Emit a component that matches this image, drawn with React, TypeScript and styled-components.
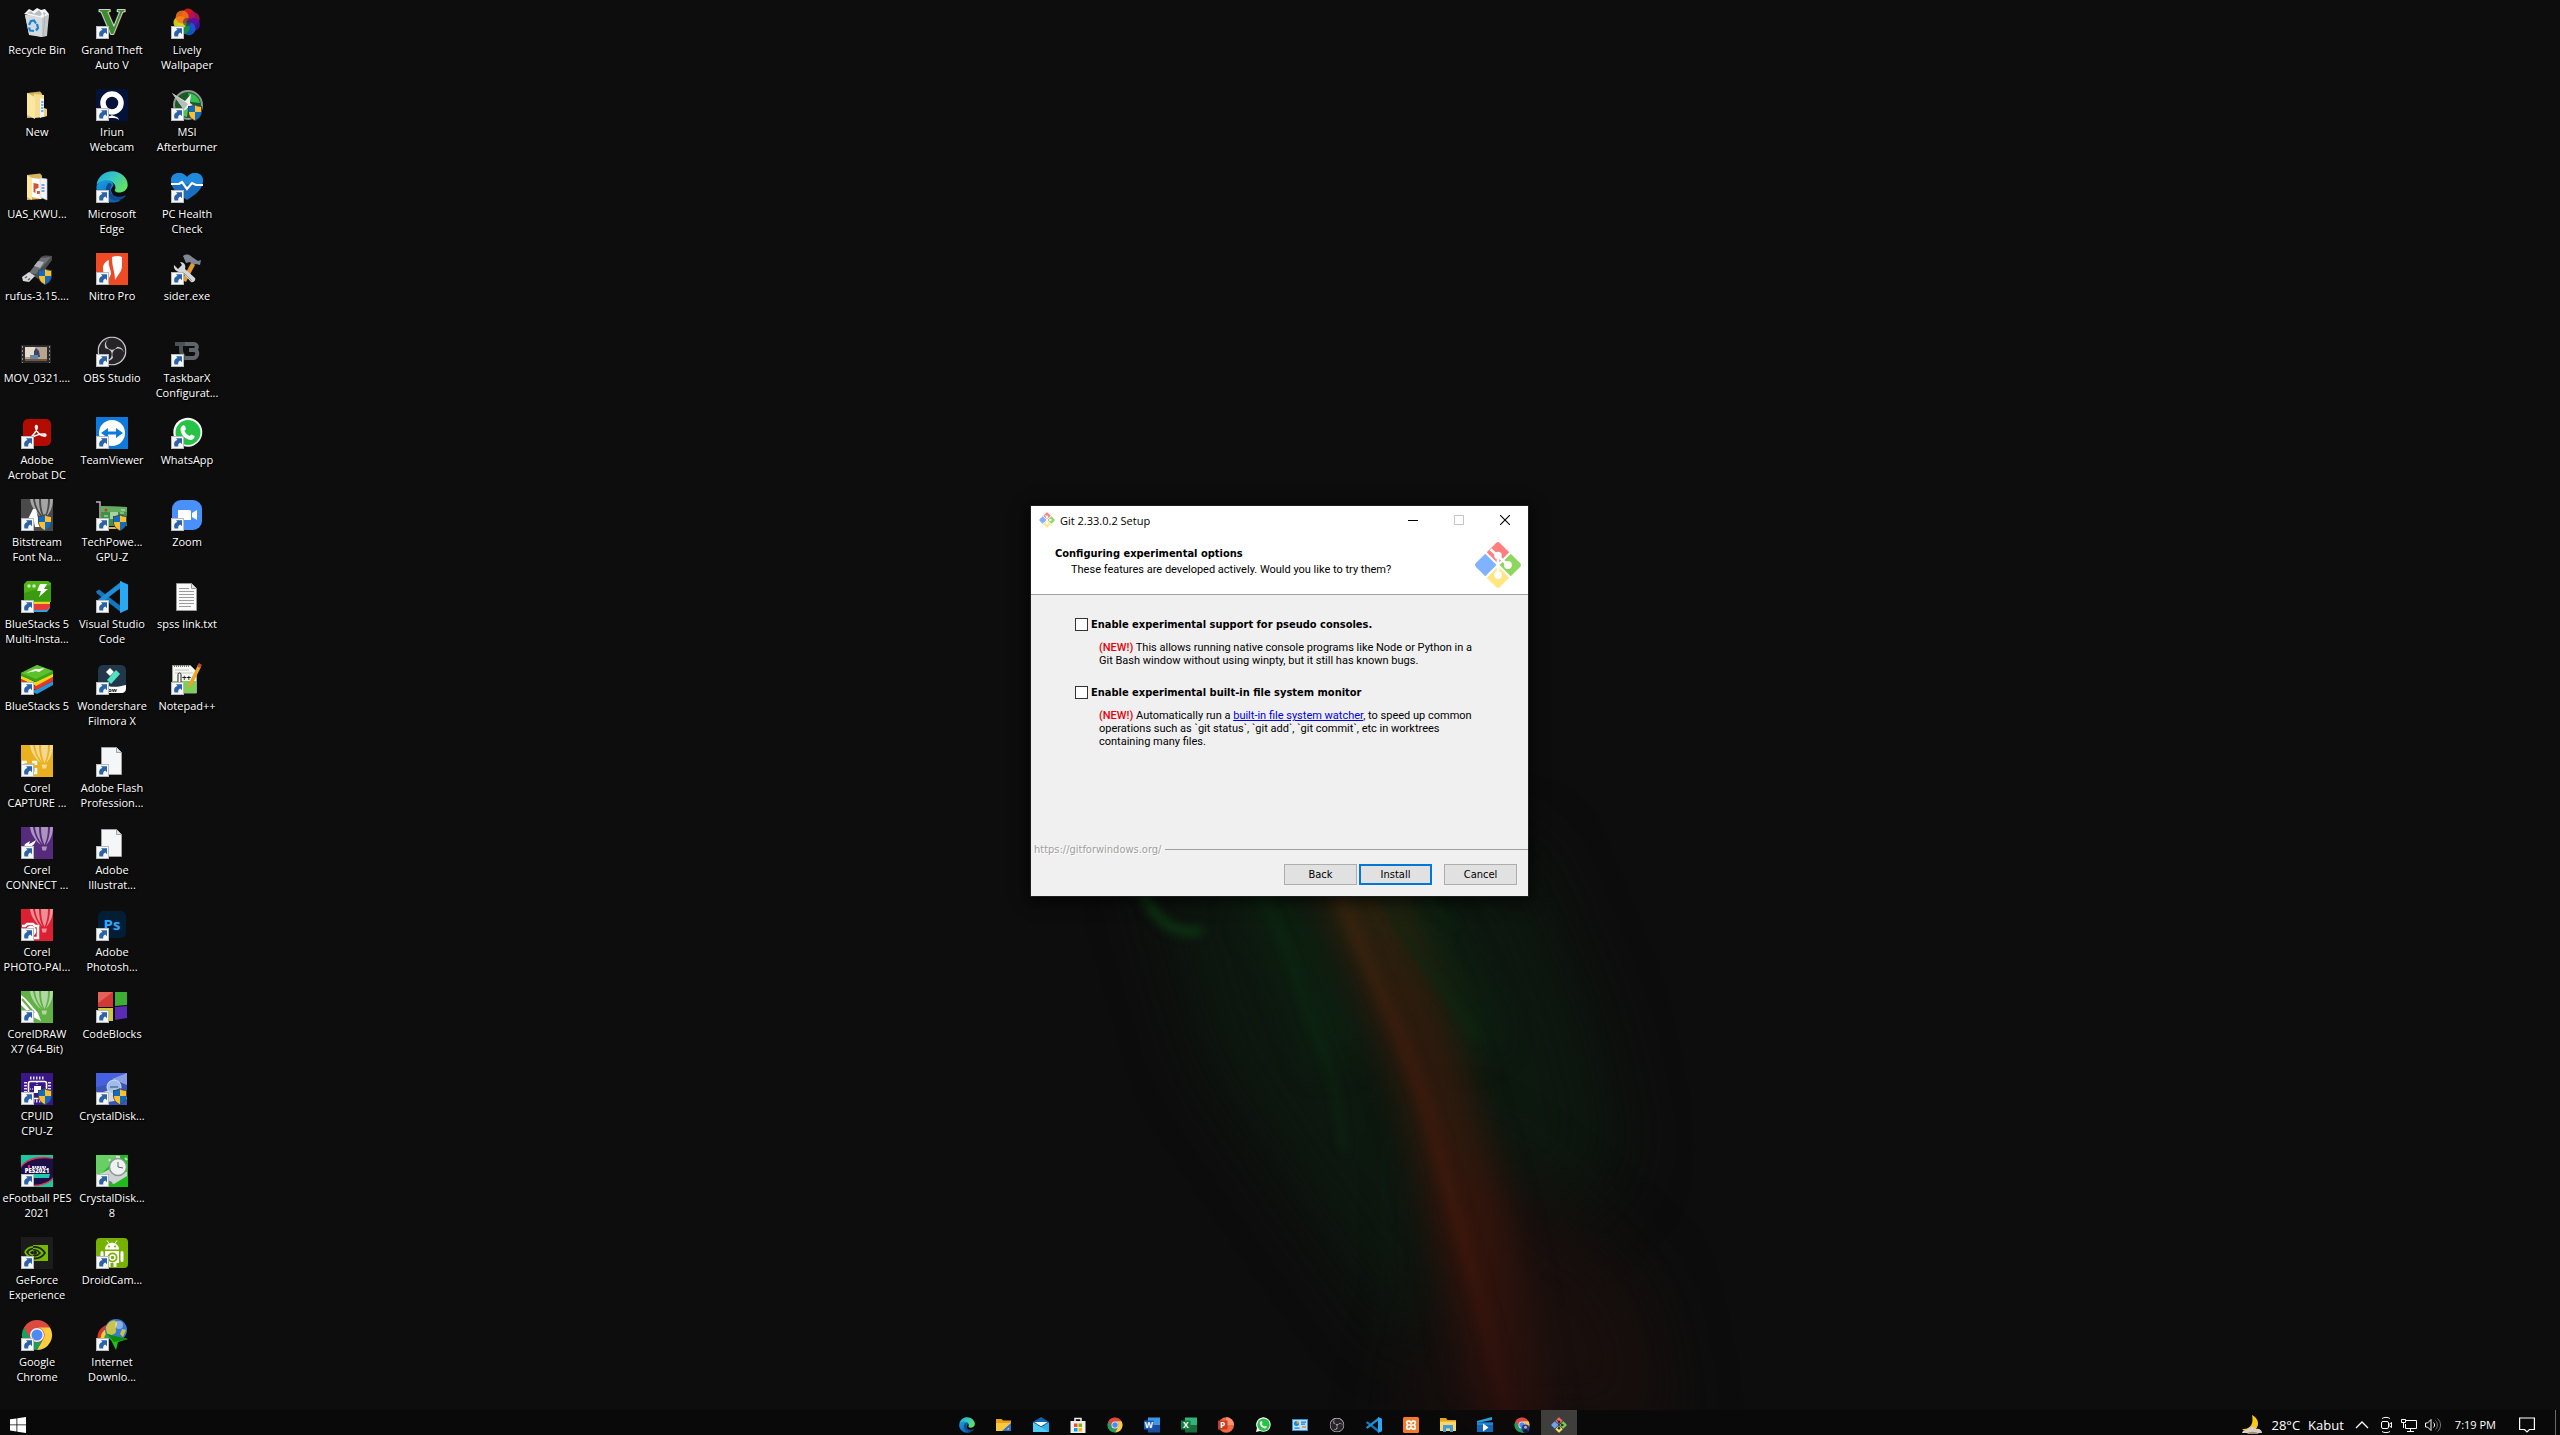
import React from 'react';
import styled, { createGlobalStyle, css } from 'styled-components';
import { SiObsstudio } from 'react-icons/si';

const shellFont = '"Open Sans", "Noto Sans", sans-serif';
const dialogFont = '"DejaVu Sans Condensed", "DejaVu Sans", sans-serif';
const proseFont = 'Roboto, "Liberation Sans", sans-serif';

const GlobalStyle = createGlobalStyle`
  *, *::before, *::after { box-sizing: border-box; }
  body { margin: 0; background: #0d0d0d; }
  button { font: inherit; color: inherit; margin: 0; padding: 0; border: 0; background: none; }
`;

/* ---------- page ---------- */

const Desktop = styled.div`
  position: relative;
  display: flex;
  flex-direction: column;
  height: 100vh;
  min-height: 640px;
  overflow: hidden;
  background: #0d0d0d;
  font-family: ${shellFont};
  font-size: 11px;
  line-height: 15px;
  color: #fff;
`;

const WallpaperArt = styled.svg`
  position: absolute;
  inset: 0;
  width: 100%;
  height: 100%;
`;

const IconGrid = styled.ul`
  position: relative;
  flex: 1;
  min-height: 0;
  display: grid;
  grid-auto-flow: column;
  grid-template-rows: repeat(auto-fill, 82px);
  grid-auto-columns: 75px;
  justify-content: start;
  margin: 0;
  padding: 0;
  list-style: none;
`;

const Launcher = styled.button`
  width: 74px;
  height: 82px;
  padding-top: 7px;
  display: flex;
  flex-direction: column;
  align-items: center;
  gap: 3px;
`;

const Artwork = styled.svg<{ $size: number }>`
  display: block;
  flex: none;
  overflow: visible;
  width: ${(p) => p.$size}px;
  height: ${(p) => p.$size}px;
`;

const LauncherName = styled.span`
  white-space: nowrap;
  text-align: center;
  text-shadow: 0 1px 2px #000, 1px 1px 1px #000;
`;

const NameLine = styled.span`
  display: block;
`;

/* ---------- icon artwork, all on a 32 unit square ---------- */

const ShortcutArrow = () => (
  <g>
    <rect x=".5" y="19.5" width="12" height="12" fill="#f6f7f8" stroke="#b8bcc0" />
    <path d="M3.500 29.500c-1-4 .5-6 3-6.500l-1.500-1.800h6v6l-1.700-1.600C7.500 26.200 7 28 7.300 29.500z" fill="#2c62a8" />
  </g>
);

const Shield = () => (
  <g>
    <path d="M24 15c2 1.500 4.500 2 7 2v5c0 5-3 8-7 10-4-2-7-5-7-10v-5c2.500 0 5-.5 7-2z" fill="#3d4a55" />
    <path d="M24 16.300V23h-6v-5c2.200 0 4.200-.6 6-1.700zM24 23h6c0 4-2.500 6.500-6 8.300z" fill="#0f6cc0" />
    <path d="M24 16.300V23h6v-5c-2.200 0-4.200-.6-6-1.700zM24 23h-6c0 4 2.500 6.500 6 8.300z" fill="#fdbf2d" />
  </g>
);

const RecycleBin = () => (
  <g>
    <path d="M4 8l4 19 13 3 4-4 3-19z" fill="#c9cdd0" />
    <path d="M4 8l17 3 7-4-2 22-5 1z" fill="#c3c8cb" />
    <path d="M4 8l4 20 13 2V11z" fill="#d6dadd" />
    <path d="M3 7l5-5 4 2 4-3 4 2 4-1 4 5-7 4z" fill="#f4f5f6" />
    <path d="M6 6l4-2 3 3 5-4 3 4-2 2zM22 5l3 1-2 3z" fill="#b7bcc0" />
    <path d="M8 18l2-4 3-.5 2 3M16 17l1 4-2 2.500M13 24l-4-.5-1-3" fill="none" stroke="#1485d8" strokeWidth="2.200" />
    <path d="M24 9l-2 20" stroke="#aeb4b8" />
  </g>
);

const Folder = ({ sheets = false }: { sheets?: boolean }) => (
  <g>
    <path d="M6 4l13-1.500 2 2V28l-15 1z" fill="#d9b45f" />
    {sheets ? (
      <g>
        <path d="M11 7l9 1v20l-9-2z" fill="#fff" />
        <path d="M12.500 12l5 1v4l-3 1v4l-2-1zM16 20h4v3h-4z" fill="#d2532f" />
        <path d="M19 7l7 1v21l-7-3z" fill="#f2f4f6" stroke="#c9d0d6" strokeWidth=".6" />
        <path d="M20.500 14h3M20.500 17h3M20.500 20h3" stroke="#4a90d2" strokeWidth="1.500" />
        <path d="M6 4l5 3v22l-5-3z" fill="#fbe6a2" />
      </g>
    ) : (
      <g>
        <path d="M13 5l10 1v22l-10 1z" fill="#f5dd8d" />
        <path d="M19 9l4 1v17l-4 2z" fill="#eff5fb" />
        <path d="M20 13h2.500M20 16h2.500M20 19h2.500M20 22h2.500" stroke="#5aa3dd" strokeWidth="1.500" />
        <path d="M23 19l3 1v7l-3 1z" fill="#f1cf70" />
        <path d="M6 4l8 4v22l-8-4z" fill="#fbe6a2" />
      </g>
    )}
  </g>
);

const UsbStick = () => (
  <g>
    <path d="M8 20L20 4c1-1.500 7-2 11-1v4L17 26z" fill="#4a4d50" />
    <path d="M8 20L20 5l10-1-15 17z" fill="#6c7074" />
    <path d="M13 13l4-5 6 1-4 6z" fill="#aeb3b7" />
    <path d="M1 24l7-5 6 4-6 6-6-1z" fill="#d5d8da" />
    <path d="M4 25l2-1.500M7 27l2-1.500" stroke="#5b5f62" strokeWidth="1.500" />
  </g>
);

const MovieClip = () => (
  <g>
    <path d="M0 10h30v18H0z" fill="#2b2b2b" />
    <path d="M4 12h22v14H4z" fill="#b9a58f" />
    <path d="M4 12h10v10H4z" fill="#e7dccb" />
    <path d="M13 16l2-3 3 3 1 6h-6z" fill="#394468" />
    <path d="M9 20h8v6H9z" fill="#6488aa" />
    <path d="M4 24h22v2H4z" fill="#72583f" />
    <path d="M1.500 11v17M28.500 11v17" stroke="#8d8d8d" strokeDasharray="2 2" />
  </g>
);

const Acrobat = () => (
  <g>
    <rect x="2" y="2" width="28" height="27" rx="5" fill="#b30b00" />
    <path d="M9 21.500c2-3 6.500-6 7.200-11 .3-2.500-2-2.500-1.700 0 .6 4 4.500 8.500 9 8.600 2 0 1.700-1.900 0-2-4-.3-8.500 1-13 3.500-2 1.200-2.500 2.200-1.500.9z" fill="none" stroke="#fff" strokeWidth="1.600" />
  </g>
);

const BalloonTile = ({ fill, children }: { fill: string; children?: React.ReactNode }) => (
  <g>
    <path d="M0 0h32v32H0z" fill={fill} />
    <g fill="#fff" fillOpacity=".5">
      <path d="M9 0h3c1 7 4 13 8 18C15 14 10 8 9 0z" />
      <path d="M14 0h4c0 7 1 13 4 18-4-5-7-10-8-18z" />
      <path d="M20 0h7c0 7-1 13-3.500 18C21 13 20 7 20 0z" />
      <path d="M29 0h3c0 8-3 14-7 18 2.500-5 4-11 4-18z" />
      <path d="M20.500 19.500h5.500l-1 4h-3.500z" />
    </g>
    {children}
  </g>
);

const FontTile = () => (
  <BalloonTile fill="#4a4a4a">
    <path d="M5 24L12 10h3l4 18h-5l-1-5z" fill="#fff" />
  </BalloonTile>
);
const CaptureTile = () => (
  <BalloonTile fill="#ebb01f">
    <path d="M2 21v-4h4M11 17h4v3M15 23v5h-4" fill="none" stroke="#fff" strokeWidth="2.500" />
  </BalloonTile>
);
const ConnectTile = () => (
  <BalloonTile fill="#562a7c">
    <path d="M4 17l5-3-1 3c3-1 5-3 7-4-1 4-4 7-7 7l1 3-6-3z" fill="#fff" />
  </BalloonTile>
);
const PhotoTile = () => (
  <BalloonTile fill="#dc1f31">
    <path d="M1 17h3l2-2h6l2 2h3v12h-6" fill="none" stroke="#fff" strokeWidth="2.500" />
    <circle cx="10" cy="22" r="4" fill="none" stroke="#fff" strokeWidth="2.500" />
  </BalloonTile>
);
const DrawTile = () => (
  <BalloonTile fill="#62b146">
    <path d="M0 4l5 4 12 14 3 8-8-4L0 14z" fill="#fff" />
    <path d="M1 8l12 14" stroke="#62b146" strokeWidth="2" />
  </BalloonTile>
);

const BlueStacksMulti = () => (
  <g>
    <path d="M3 24h26v3l-3 4H5z" fill="#2ba3e0" />
    <path d="M3 22h26v4l-3 3H3z" fill="#e83a3a" />
    <path d="M3 19h26v4H3z" fill="#f6cf1f" />
    <path d="M6 0h21l3 2v19H3V3z" fill="#4fb318" />
    <path d="M3 12l27-8v16H3z" fill="#3a9b10" />
    <path d="M19 3h7l-3 5h4l-9 8 2-6h-4z" fill="#fff" />
    <circle cx="8" cy="5" r="1.800" fill="#c7efae" />
    <circle cx="13" cy="5" r="1.800" fill="#c7efae" />
  </g>
);

const BlueStacks = () => (
  <g>
    <path d="M1 20l13 7 18-9v4l-16 9L1 25z" fill="#2196dd" />
    <path d="M0 16l14 7 18-9v4l-17 9L0 20z" fill="#e8342c" />
    <path d="M0 12l14 7 18-9v4l-17 9L0 16z" fill="#f8d31c" />
    <path d="M0 10L16 2l16 6v3l-17 8L0 13z" fill="#37a514" />
    <path d="M0 10L16 2l16 6-17 8z" fill="#5cc12b" />
    <path d="M5 10l9-4h4l6-1-6 4-3-1z" fill="#fff" />
  </g>
);

const RoadsterV = () => (
  <text x="16" y="27" textAnchor="middle" fontFamily="Liberation Serif" fontWeight="700" fontSize="36" fill="#3f8a2e" stroke="#f3f5f2" strokeWidth="1.600" paintOrder="stroke">
    V
  </text>
);

const Iriun = () => (
  <g>
    <rect width="32" height="32" rx="2" fill="#021238" />
    <path d="M9 31c1-4 4-3 7-5 3 2 6 1 7 5-2-2-5-2-7-2s-5 0-7 2z" fill="#fff" />
    <circle cx="16" cy="14" r="9" fill="none" stroke="#fff" strokeWidth="5.500" />
  </g>
);

const Edge = () => (
  <g>
    <defs>
      <linearGradient id="edgeTop" x1="0" y1="0" x2="1" y2=".6">
        <stop offset="0" stopColor="#1fa9dc" />
        <stop offset=".5" stopColor="#36c6c4" />
        <stop offset="1" stopColor="#63e164" />
      </linearGradient>
      <linearGradient id="edgeSide" x1="0" y1="0" x2=".6" y2="1">
        <stop offset="0" stopColor="#1aa0e6" />
        <stop offset="1" stopColor="#0f62b4" />
      </linearGradient>
    </defs>
    <path d="M.5 14C2 5 9 .3 16 .3 25 .3 31.700 7 31.700 14c0 5-4.700 7.500-8.700 7.500-3 0-5-1.500-4-3 1-1.500 1-7.500-6.500-8.500C6 9.300 2 12 .5 14z" fill="url(#edgeTop)" />
    <path d="M.5 15C2 11.500 6.500 8.500 12 9.300c3 .5 5 2 5.700 4.700l-3 5 4 9 6 1.500c-3 1.700-6 2.200-9.200 2C6 31-.5 23 .5 15z" fill="url(#edgeSide)" />
    <path d="M12 12.500C9 16 9 23 14 27.500c4 3.500 11 2.500 15.500-2 .7-.8 0-1.200-1-.8-5.500 2.300-13 .8-14.200-5.200-.3-2.500.7-4.500 1.700-5.500-1.500-2.200-3-2.500-4-1.500z" fill="#124a90" />
  </g>
);

const Nitro = () => (
  <g>
    <path d="M0 0h32v32H0z" fill="#ee4a23" />
    <path d="M16 4c4-1.500 7-1.500 10 0v8c0 7-3 8-7 15 0-9-3-12-3-23z" fill="#fff" />
    <path d="M7 15c0-4 3-7 6-8-1 6 2 9 2 14-1 3-3 5-4 7-2-4-4-7-4-13z" fill="#fff" />
  </g>
);

const ObsDisc = () => (
  <g>
    <circle cx="16" cy="16" r="14.500" fill="#262427" />
    <SiObsstudio x="1.500" y="1.500" size={29} color="#c9c9c9" />
  </g>
);

const TeamViewer = () => (
  <g>
    <path d="M0 0h32v32H0z" fill="#0e7bdc" />
    <circle cx="16" cy="16" r="13" fill="#fff" />
    <path d="M5 16l7-5v3.500h8V11l7 5-7 5v-3.500h-8V21z" fill="#0e7bdc" />
  </g>
);

const GraphicsCard = () => (
  <g>
    <path d="M0 3h4v28" fill="none" stroke="#b9b9b9" strokeWidth="1.500" />
    <path d="M5 7l26 1v19H5z" fill="#3f9145" />
    <path d="M5 7l26 1v5H5z" fill="#63ad60" />
    <rect x="14" y="13" width="8" height="7" fill="#a8d3a1" />
    <circle cx="10" cy="11" r="1.500" fill="#c73b33" />
    <path d="M8 17h4M8 20h4M25 11h4M24 14h4" stroke="#d6e8c9" />
    <path d="M8 28h14v2H8z" fill="#d8b64c" />
  </g>
);

const VsCode = () => (
  <g>
    <path d="M0 10.500l3-2L26 26v6L1 12.500z" fill="#1076bd" />
    <path d="M0 21.500l3 2L26 6V0L1 19.500z" fill="#1d8fd8" />
    <path d="M24 0l8 3.500v25L24 32V0z" fill="#2aa8f2" />
    <path d="M24 9v14l-9-7z" fill="#0d0d0d" />
  </g>
);

const Filmora = () => (
  <g>
    <rect x="2" y="2" width="28" height="28" rx="5" fill="#22384a" />
    <path d="M14 5l4 4-4 4-4-4z" fill="#fff" />
    <path d="M20 7l4 4-9 10-4-4z" fill="#50e3c2" />
    <path d="M12 23c7 2 13 0 18-1v3c0 4-2 5-5 5H12z" fill="#fff" />
    <text x="12" y="29" fontFamily="Open Sans" fontWeight="700" fontSize="6" fill="#111">
      ow
    </text>
  </g>
);

const BlankPage = () => (
  <g>
    <path d="M5.500 2.500h15l5 5v22h-20z" fill="#f5f6f7" stroke="#9fa3a6" />
    <path d="M20.500 2.500v5h5" fill="#dfe2e4" stroke="#9fa3a6" />
  </g>
);

const TextPage = () => (
  <g>
    <path d="M5.500 2.500h15l5 5v22h-20z" fill="#fafafa" stroke="#9a9a9a" />
    <path d="M20.500 2.500v5h5" fill="#e3e3e3" stroke="#9a9a9a" />
    <path d="M8 7.500h10M8 10.500h15M8 13.500h15M8 16.500h15M8 19.500h15M8 22.500h15M8 25.500h12" stroke="#9b9b9b" />
  </g>
);

const Photoshop = () => (
  <g>
    <rect x="2" y="2" width="28" height="27" rx="5" fill="#001e36" />
    <text x="16" y="21" textAnchor="middle" fontFamily="Open Sans" fontWeight="700" fontSize="15" fill="#31a8ff">
      Ps
    </text>
  </g>
);

const CodeBlocks = () => (
  <g>
    <path d="M2 1h15v15H2z" fill="#cf3a34" />
    <path d="M2 1h15L2 12z" fill="#e2625a" />
    <path d="M19 1h12v13l-12 1z" fill="#3fae35" />
    <path d="M2 17h15v13H4z" fill="#d0ca39" />
    <path d="M19 16l12-1v12l-12 2z" fill="#5a2bb5" />
  </g>
);

const CpuChip = () => (
  <g>
    <path d="M0 0h32v32H0z" fill="#3b1686" />
    <path d="M9 5h15M9 28h15M4.500 9v15M28.500 9v15" stroke="#e3dbf4" strokeWidth="3" strokeDasharray="1.500 1.500" />
    <rect x="7.500" y="8.500" width="18" height="17" rx="2" fill="none" stroke="#fff" strokeWidth="1.600" />
    <rect x="13" y="13" width="7" height="7" fill="#fff" />
    <path d="M16 9v6M9 16h6" stroke="#fff" strokeDasharray="1 1" />
  </g>
);

const DiskInfo = () => (
  <g>
    <path d="M0 0h31v32H0z" fill="#3c55b8" />
    <path d="M0 0h31v8L0 14z" fill="#4560e0" />
    <path d="M31 0v12L16 6z" fill="#8b9fe4" />
    <path d="M4 20l16-5 11 4v7L12 29z" fill="#d4d8dc" />
    <circle cx="18" cy="14" r="7" fill="#a9c8ec" fillOpacity=".9" stroke="#d7e4f3" />
    <path d="M14 14h8" stroke="#5f86b6" strokeWidth="2" />
  </g>
);

const DiskMark = () => (
  <g>
    <path d="M0 0h32v32H0z" fill="#1fba1c" />
    <path d="M0 0h24L0 24z" fill="#67cf63" />
    <path d="M2 20l14-7 15 4v4L18 29l-8-3z" fill="#cfd3d3" />
    <path d="M4 22l12 6" stroke="#777" strokeWidth="1.500" />
    <circle cx="22" cy="12" r="8.500" fill="#f0f2f2" stroke="#8e9696" strokeWidth="1.500" />
    <path d="M22 12V7M22 12l5 1" stroke="#5d6464" />
    <path d="M20 2h4M29 3l2 2M14 4l-1 2" stroke="#d8dada" strokeWidth="2" />
  </g>
);

const Efootball = () => (
  <g>
    <path d="M0 0h32v32H0z" fill="#19c9a2" />
    <path d="M0 11C6 2 20 0 32 3v21c-6 7-20 9-32 6z" fill="#e0354f" />
    <path d="M0 13C6 4 20 2 32 4v18c-6 8-20 9-32 7z" fill="#1c0f48" />
    <path d="M12 19h17l-1 4H12z" fill="#1fc7ae" />
    <text x="16" y="18" textAnchor="middle" fontFamily="Open Sans" fontWeight="800" fontSize="6" fill="#fff">
      PES2021
    </text>
    <path d="M7 10h2v3H7z" fill="#d8258d" />
    <path d="M11 12h14" stroke="#d9d5e8" strokeWidth="2" strokeDasharray="2 .5" />
  </g>
);

const GeForce = () => (
  <g>
    <path d="M0 0h32v32H0z" fill="#1c1c1c" />
    <path d="M12 8h15v16H12z" fill="#76b900" />
    <path d="M4 15c5-7 15-7 20 1-5 7-15 8-20-1z" fill="none" stroke="#1c2410" strokeWidth="1.800" />
    <path d="M4 15c2-3.500 5-5 8-5.200M4 15c2 4 5 5.500 8 6" fill="none" stroke="#76b900" strokeWidth="1.800" />
    <path d="M8 15.500c3-4 8-3.500 11 .5-3 4-8 3.500-11-.5z" fill="none" stroke="#1c2410" strokeWidth="1.600" />
    <path d="M8 15.500c1-1.500 2.500-2.200 4-2.500M8 15.500c1 1.500 2.500 2.500 4 2.800" fill="none" stroke="#76b900" strokeWidth="1.600" />
    <circle cx="14" cy="15.700" r="2" fill="#1c2410" />
  </g>
);

const DroidCam = () => (
  <g>
    <rect y="1" width="32" height="30" rx="4" fill="#76b100" />
    <path d="M9 12.500c0-9 14-9 14 0z" fill="#fff" />
    <path d="M11 3.500l2 3M21 3.500l-2 3" stroke="#fff" />
    <circle cx="13" cy="9.500" r="1" fill="#76b100" />
    <circle cx="19" cy="9.500" r="1" fill="#76b100" />
    <path d="M9 14h14v12H9z" fill="#fff" />
    <path d="M6 15.500v8M26 15.500v8" stroke="#fff" strokeWidth="3" strokeLinecap="round" />
    <path d="M13 26v4M19 26v4" stroke="#fff" strokeWidth="3" />
    <circle cx="16.500" cy="20.500" r="5" fill="#76b100" />
    <circle cx="16.500" cy="20.500" r="2.500" fill="none" stroke="#fff" strokeWidth="1.500" />
  </g>
);

const Chrome = () => {
  const blade = 'M3 8.500A15 15 0 0 1 29 8.500H16A7.500 7.500 0 0 0 9.500 19.750z';
  return (
    <g>
      <circle cx="16" cy="16" r="14.500" fill="#db4437" />
      <path d={blade} fill="#db4a3e" />
      <path d={blade} fill="#ffcd42" transform="rotate(120 16 16)" />
      <path d={blade} fill="#17a05e" transform="rotate(240 16 16)" />
      <circle cx="16" cy="16" r="7" fill="#f4f6f8" />
      <circle cx="16" cy="16" r="5.500" fill="#4c8bf5" />
    </g>
  );
};

const ChromeProfile = () => (
  <g>
    <Chrome />
    <circle cx="23" cy="23" r="8" fill="#1b3f9c" />
    <circle cx="23" cy="20.500" r="3" fill="#d9a688" />
    <path d="M18 30c0-8 10-8 10 0z" fill="#101a35" />
  </g>
);

const DownloadManager = () => (
  <g>
    <path d="M3 26C-2 14 6 5 16 5l1 4C9 9 4 16 7 26z" fill="#d8352a" />
    <path d="M6 26C2 17 7 9 16 8l1 3c-7 1-10 8-7 15z" fill="#f5d02c" />
    <path d="M9 26c-3-8 1-14 8-15v3c-5 1-6 7-4 12z" fill="#39a935" />
    <circle cx="20" cy="11" r="11" fill="#3a7ad6" />
    <path d="M10 8c3-7 9-8 11-5 1 3-2 5-1 8s-3 5-6 5-4-4-4-8zM26 10l4 1-3 7-3-3z" fill="#c9c34a" />
    <circle cx="23" cy="6" r="4" fill="#fff" fillOpacity=".4" />
    <path d="M11 15l21 5-10 3-2 8-4-8z" fill="#1ec41a" />
    <path d="M11 15l21 5-14 3z" fill="#0f8a10" />
  </g>
);

const LivelyPetals = () => {
  const petals = ['#ee1c1c', '#b0125e', '#4b12b5', '#1262d8', '#14982d', '#f4e51a', '#f7761a'];
  return (
    <g>
      {petals.map((fill, i) => (
        <circle key={fill} cx="16" cy="8" r="6.500" fill={fill} fillOpacity=".85" transform={`rotate(${i * 51 + 10} 16 15)`} />
      ))}
      <circle cx="16" cy="15" r="4" fill="#332b52" fillOpacity=".6" />
    </g>
  );
};

const Afterburner = () => (
  <g>
    <circle cx="17" cy="16" r="14" fill="#1d5a2a" stroke="#8f9892" strokeWidth="2" />
    <path d="M17 4a12 12 0 0 1 12 10l-9-1z" fill="#36c04d" />
    <path d="M7 20a11 11 0 0 0 9 8l1-8z" fill="#46c85a" />
    <path d="M1 4l13 8 6-7-1 9 8 6-10-1-6 4 0-5z" fill="#eef0ef" />
    <path d="M1 4l16 11-6 8 0-5z" fill="#b8bdba" />
  </g>
);

const HealthHeart = () => (
  <g>
    <path d="M16 29C8 24 0 18 0 10 0 4 4 2 8 2c4 0 6 2 8 4 2-2 4-4 8-4s8 2 8 8c0 8-8 14-16 19z" fill="#1a6fc0" />
    <path d="M0 10c0-6 4-8 8-8 4 0 6 2 8 4 2-2 4-4 8-4s8 2 8 8l-1 3H1z" fill="#2089dc" />
    <path d="M0 13h8l3-2 5 7 5-6 4 2h7" fill="none" stroke="#fff" strokeWidth="2.200" />
  </g>
);

const Tools = () => (
  <g>
    <path d="M12 3c4-3 7-1 9 1l6 4 3-1-1 5-4-1-3 1-3-3-4 1z" fill="#7f8794" />
    <path d="M20 10l4 2-9 17-4-2z" fill="#e59a2f" />
    <path d="M3 12l4 4 4-4-2-3c5 0 6 4 5 7l10 9c1 2-1 5-4 4l-9-10c-5 1-9-3-8-7z" fill="#d4d7da" />
    <path d="M12 19l9 9" stroke="#90959a" />
  </g>
);

const TaskbarX = () => (
  <g fill="none" stroke="#60656a" strokeWidth="4">
    <path d="M4 9h12M10 9v6c0 4 2 6 5 9" stroke="#4c5156" />
    <path d="M14 9h9c4 0 4 6-1 6h-4 5c5 0 4 8-1 8h-8" />
  </g>
);

const WhatsApp = () => (
  <g>
    <path d="M2 30l2-8A14.500 14.500 0 1 1 10 28z" fill="#fff" />
    <circle cx="17" cy="15.500" r="12.500" fill="#27c346" />
    <path d="M11 9c1-1 2-1 3 0l1 3-1.500 2c1 2 3 4 5 5l2-1.500 3 1.500c.5 2-2 4-4 4-6-1-10-6-10-11 0-1 .5-2 1.500-3z" fill="#fff" />
  </g>
);

const ZoomCamera = () => (
  <g>
    <rect x="1" y="1" width="30" height="30" rx="9" fill="#4a90fb" />
    <path d="M7 11h11c2 0 2 1 2 2v8H9c-2 0-2-1-2-2zM21 14l5-3v10l-5-3z" fill="#fff" />
  </g>
);

const NotepadPlus = () => (
  <g>
    <path d="M1.500 2.500h18l6 6v21.500h-24z" fill="#f6f8f4" stroke="#9da59b" />
    <path d="M2 18h23v12H2z" fill="#7fce55" />
    <path d="M3 3h15" stroke="#777" strokeDasharray="1 1" strokeWidth="2" />
    <path d="M4 7h14M4 10h18" stroke="#c2c9c0" />
    <rect x="7" y="10" width="3" height="11" rx="1.500" fill="#fff" stroke="#222" />
    <text x="11" y="18" fontFamily="Open Sans" fontWeight="700" fontSize="8" fill="#1d1d1d">
      ++
    </text>
    <path d="M17 25l1-5L27 2l3 2-9 18z" fill="#e8a526" />
    <path d="M26 3l2-3 3 2-2 3z" fill="#b94a3c" />
  </g>
);

/* taskbar-only artwork */

const ExplorerPen = () => (
  <g>
    <path d="M0 4h11l3 3h16v21H0z" fill="#e89f1a" />
    <path d="M0 12h30v16H0z" fill="#fdc93c" />
    <path d="M30 12v16H12z" fill="#2e6fd8" />
    <path d="M26 21v4h-5z" fill="#fdc93c" />
  </g>
);
const Mail = () => (
  <g>
    <path d="M0 10L16 0l16 10v6H0z" fill="#0f64ad" />
    <path d="M0 11l16 9 16-9v19H0z" fill="#2db0ef" />
    <path d="M0 11l32 19H0z" fill="#52ccf8" />
    <path d="M3 10h26l-13 9z" fill="#f4f9fd" />
  </g>
);
const Store = () => (
  <g>
    <path d="M10 10V3h12v7" fill="none" stroke="#f0f0f0" strokeWidth="3" />
    <path d="M1 8h30v24H1z" fill="#f0f0f0" />
    <path d="M8 13h7v7H8z" fill="#f05022" />
    <path d="M17 13h7v7h-7z" fill="#7fba00" />
    <path d="M8 22h7v7H8z" fill="#00a3ee" />
    <path d="M17 22h7v7h-7z" fill="#ffb800" />
  </g>
);
const OfficeTile = ({ letter, tones }: { letter: string; tones: [string, string, string] }) => (
  <g>
    <path d="M8 1h24v15H8z" fill={tones[0]} />
    <path d="M8 16h24v15H8z" fill={tones[1]} />
    <path d="M0 7h19v18H0z" fill={tones[2]} />
    <text x="9.500" y="22" textAnchor="middle" fontFamily="Open Sans" fontWeight="700" fontSize="17" fill="#fff">
      {letter}
    </text>
  </g>
);
const Word = () => <OfficeTile letter="W" tones={['#3a9ae6', '#1a4fa0', '#1c5bbd']} />;
const Excel = () => <OfficeTile letter="X" tones={['#2fb57a', '#1a6a3d', '#137a43']} />;
const PowerPoint = () => (
  <g>
    <circle cx="16.500" cy="16" r="15.500" fill="#ee6a48" />
    <path d="M16.500 .5A15.500 15.500 0 0 1 32 16H16.500z" fill="#ff9272" />
    <path d="M0 7h19v18H0z" fill="#c43e1f" />
    <text x="9.500" y="22" textAnchor="middle" fontFamily="Open Sans" fontWeight="700" fontSize="17" fill="#fff">
      P
    </text>
  </g>
);
const ControlCard = () => (
  <g>
    <path d="M0 4h32v24H0z" fill="#2f93d6" />
    <path d="M2 6h28v20H2z" fill="#b9e1f8" />
    <circle cx="9" cy="13" r="5" fill="#1e7fd0" />
    <path d="M9 13V8a5 5 0 0 1 5 5z" fill="#f8a51d" />
    <path d="M18 10h10M18 14h8M5 22h10" stroke="#1e7fd0" strokeWidth="2.500" />
    <path d="M20 20h8" stroke="#f0813a" strokeWidth="3" />
  </g>
);
const Xampp = () => (
  <g>
    <rect width="32" height="32" rx="3" fill="#f47a28" />
    <path d="M10 8h3l3 4 3-4h3c3 0 4 5 0 8 4 3 3 8 0 8h-3l-3-4-3 4h-3c-3 0-4-5 0-8-4-3-3-8 0-8z" fill="none" stroke="#fff" strokeWidth="3.500" />
    <path d="M12 16h8" stroke="#fff" strokeWidth="3" />
  </g>
);
const ExplorerFolder = () => (
  <g>
    <path d="M0 2h12l3 4h17v22H0z" fill="#e5a516" />
    <path d="M0 9h32v19H0z" fill="#fbd768" />
    <path d="M6 28V16h20v14h-6v-7h-8v7H6z" fill="#3f9be4" />
  </g>
);
const Movies = () => (
  <g>
    <path d="M0 8L30 0v6L0 12z" fill="#28a4e0" />
    <path d="M0 11h32v19H0z" fill="#1567b8" />
    <path d="M0 11h32v5H0z" fill="#1f86cf" />
    <path d="M12 13l11 8-11 8z" fill="#fff" />
  </g>
);

const GitMark = ({ branch, tones }: { branch: string; tones: [string, string, string, string] }) => (
  <g>
    <g transform="rotate(45 16 16)">
      <path d="M15.300 4.700H6.500q-1.800 0-1.800 1.800v8.800h10.600z" fill={tones[0]} />
      <path d="M16.700 4.700h8.800q1.800 0 1.800 1.800v8.800H16.700z" fill={tones[1]} />
      <path d="M16.700 27.300h8.800q1.800 0 1.800-1.800v-8.800H16.700z" fill={tones[2]} />
      <path d="M15.300 27.300H6.500q-1.800 0-1.800-1.800v-8.800h10.600z" fill={tones[3]} />
    </g>
    <path d="M11 5.500l5 4.500v13M16 10l6.500 6" fill="none" stroke={branch} strokeWidth="1.800" />
    <circle cx="16" cy="9.700" r="2.500" fill={branch} />
    <circle cx="16" cy="22.600" r="2.600" fill={branch} />
    <circle cx="22.600" cy="16" r="2.600" fill={branch} />
  </g>
);
const GitSoft = () => <GitMark branch="#fff" tones={['#ff7f7f', '#8fd65f', '#ffe680', '#7fb2ff']} />;
const GitTask = () => <GitMark branch="#2c3030" tones={['#ef6a6a', '#7ccf50', '#f7df6c', '#6aa3f2']} />;

/* ---------- desktop launchers ---------- */

type Shortcut = { name: string[]; Art: React.ComponentType; plain?: boolean; admin?: boolean };

const FolderSheets = () => <Folder sheets />;

const shortcuts: Shortcut[] = [
  { name: ['Recycle Bin'], Art: RecycleBin, plain: true },
  { name: ['New'], Art: Folder as React.ComponentType, plain: true },
  { name: ['UAS_KWU...'], Art: FolderSheets, plain: true },
  { name: ['rufus-3.15....'], Art: UsbStick, plain: true, admin: true },
  { name: ['MOV_0321....'], Art: MovieClip, plain: true },
  { name: ['Adobe', 'Acrobat DC'], Art: Acrobat },
  { name: ['Bitstream', 'Font Na...'], Art: FontTile, admin: true },
  { name: ['BlueStacks 5', 'Multi-Insta...'], Art: BlueStacksMulti },
  { name: ['BlueStacks 5'], Art: BlueStacks },
  { name: ['Corel', 'CAPTURE ...'], Art: CaptureTile },
  { name: ['Corel', 'CONNECT ...'], Art: ConnectTile },
  { name: ['Corel', 'PHOTO-PAI...'], Art: PhotoTile },
  { name: ['CorelDRAW', 'X7 (64-Bit)'], Art: DrawTile },
  { name: ['CPUID', 'CPU-Z'], Art: CpuChip, admin: true },
  { name: ['eFootball PES', '2021'], Art: Efootball },
  { name: ['GeForce', 'Experience'], Art: GeForce },
  { name: ['Google', 'Chrome'], Art: Chrome },
  { name: ['Grand Theft', 'Auto V'], Art: RoadsterV },
  { name: ['Iriun', 'Webcam'], Art: Iriun },
  { name: ['Microsoft', 'Edge'], Art: Edge },
  { name: ['Nitro Pro'], Art: Nitro },
  { name: ['OBS Studio'], Art: ObsDisc },
  { name: ['TeamViewer'], Art: TeamViewer },
  { name: ['TechPowe...', 'GPU-Z'], Art: GraphicsCard, admin: true },
  { name: ['Visual Studio', 'Code'], Art: VsCode },
  { name: ['Wondershare', 'Filmora X'], Art: Filmora },
  { name: ['Adobe Flash', 'Profession...'], Art: BlankPage },
  { name: ['Adobe', 'Illustrat...'], Art: BlankPage },
  { name: ['Adobe', 'Photosh...'], Art: Photoshop },
  { name: ['CodeBlocks'], Art: CodeBlocks },
  { name: ['CrystalDisk...'], Art: DiskInfo, admin: true },
  { name: ['CrystalDisk...', '8'], Art: DiskMark },
  { name: ['DroidCam...'], Art: DroidCam },
  { name: ['Internet', 'Downlo...'], Art: DownloadManager },
  { name: ['Lively', 'Wallpaper'], Art: LivelyPetals },
  { name: ['MSI', 'Afterburner'], Art: Afterburner, admin: true },
  { name: ['PC Health', 'Check'], Art: HealthHeart },
  { name: ['sider.exe'], Art: Tools },
  { name: ['TaskbarX', 'Configurat...'], Art: TaskbarX },
  { name: ['WhatsApp'], Art: WhatsApp },
  { name: ['Zoom'], Art: ZoomCamera },
  { name: ['spss link.txt'], Art: TextPage, plain: true },
  { name: ['Notepad++'], Art: NotepadPlus },
];

const DesktopIcon = ({ name, Art, plain, admin }: Shortcut) => (
  <li>
    <Launcher type="button">
      <Artwork $size={32} viewBox="0 0 32 32" aria-hidden="true">
        <Art />
        {!plain && <ShortcutArrow />}
        {admin && <Shield />}
      </Artwork>
      <LauncherName>
        {name.map((line) => (
          <NameLine key={line}>{line}</NameLine>
        ))}
      </LauncherName>
    </Launcher>
  </li>
);

/* ---------- wallpaper ---------- */

const Wallpaper = () => (
  <WallpaperArt viewBox="0 0 2560 1435" preserveAspectRatio="xMidYMax slice" aria-hidden="true">
    <defs>
      <filter id="haze" x="-50%" y="-50%" width="200%" height="200%" colorInterpolationFilters="sRGB">
        <feGaussianBlur stdDeviation="34" />
      </filter>
      <filter id="soft" x="-50%" y="-20%" width="200%" height="140%" colorInterpolationFilters="sRGB">
        <feGaussianBlur stdDeviation="16" />
      </filter>
      <filter id="thin" x="-50%" y="-50%" width="200%" height="200%" colorInterpolationFilters="sRGB">
        <feGaussianBlur stdDeviation="5" />
      </filter>
      <linearGradient id="ember" gradientUnits="userSpaceOnUse" x1="1330" y1="890" x2="1510" y2="1420">
        <stop offset="0" stopColor="#35260f" />
        <stop offset=".3" stopColor="#3b1c0d" />
        <stop offset=".65" stopColor="#3d170c" />
        <stop offset="1" stopColor="#2a100d" />
      </linearGradient>
    </defs>
    <path d="M1150 850L1520 850 1590 1020 1620 1160 1560 1220 1480 1200 1470 1330 1400 1330 1300 1190 1210 1060z" fill="#0d180f" filter="url(#haze)" />
    <path d="M1440 1130L1540 1200 1640 1290 1670 1435H1400L1440 1300z" fill="#190f0d" filter="url(#haze)" />
    <path d="M1250 860C1290 930 1310 970 1340 1060M1390 870C1430 950 1450 980 1480 1050" fill="none" stroke="#0d2110" strokeWidth="44" filter="url(#soft)" />
    <path d="M1295 850L1385 850C1430 960 1460 1040 1480 1120 1510 1210 1530 1300 1550 1435H1480C1460 1330 1440 1240 1410 1130 1385 1040 1340 950 1295 850z" fill="url(#ember)" fillOpacity=".7" filter="url(#soft)" />
    <path d="M1332 870C1365 970 1410 1040 1434 1133S1475 1270 1510 1420" fill="none" stroke="url(#ember)" strokeOpacity=".8" strokeWidth="16" filter="url(#thin)" />
    <path d="M1138 885C1152 912 1168 938 1202 930" fill="none" stroke="#0d3313" strokeWidth="10" filter="url(#thin)" />
    <path d="M1258 890C1290 940 1300 1000 1322 1050S1335 1120 1345 1150M1384 895C1412 960 1455 1000 1478 1040M1425 898L1455 925" fill="none" stroke="#0c2712" strokeWidth="5" filter="url(#thin)" />
  </WallpaperArt>
);

/* ---------- setup window ---------- */

const SetupWindow = styled.section`
  position: absolute;
  top: 506px;
  left: calc(50% - 249px);
  width: 497px;
  display: flex;
  flex-direction: column;
  background: #f0f0f0;
  color: #000;
  font-family: ${dialogFont};
  font-size: 11px;
  line-height: 13px;
  box-shadow: 0 0 0 1px #1c1f1d, 0 3px 14px 3px rgba(0, 0, 0, 0.65);
`;

const TitleBar = styled.header`
  display: flex;
  align-items: center;
  height: 30px;
  padding: 0 0 2px 8px;
  background: #fff;
  font-family: ${shellFont};
`;

const WindowTitle = styled.h1`
  flex: 1;
  margin: 0 0 0 5px;
  font-size: 11px;
  font-weight: 400;
`;

const CaptionButton = styled.button<{ $muted?: boolean }>`
  width: 46px;
  height: 28px;
  display: grid;
  place-items: center;
  color: ${(p) => (p.$muted ? '#c4c4c4' : '#000')};
`;

const PageHead = styled.div`
  display: flex;
  justify-content: space-between;
  align-items: flex-start;
  padding: 5px 6px 5px 24px;
  background: #fff;
  border-bottom: 1px solid #a0a0a0;
`;

const HeadText = styled.div`
  display: flex;
  flex-direction: column;
  gap: 3px;
  padding-top: 6px;
`;

const HeadTitle = styled.h2`
  margin: 0;
  font-size: 11px;
  font-weight: 700;
`;

const HeadNote = styled.p`
  margin: 0 0 0 16px;
  font-family: ${proseFont};
`;

const Options = styled.form`
  display: flex;
  flex-direction: column;
  gap: 19px;
  min-height: 248px;
  padding: 23px 40px 0 44px;
`;

const Option = styled.div`
  display: flex;
  flex-direction: column;
  gap: 10px;
`;

const OptionLabel = styled.label`
  display: flex;
  align-items: center;
  gap: 3px;
  font-weight: 700;
`;

const CheckBox = styled.input`
  appearance: none;
  width: 13px;
  height: 13px;
  margin: 0;
  border: 1px solid #333;
  background: #fff;
`;

const OptionText = styled.p`
  margin: 0 0 0 24px;
  font-family: ${proseFont};
`;

const NewTag = styled.span`
  color: #e8000b;
  font-weight: 500;
`;

const DocLink = styled.a`
  color: #0000e0;
  text-decoration: underline;
`;

const HomeRow = styled.div`
  display: flex;
  align-items: center;
  gap: 4px;
  padding-left: 3px;
  color: #a0a0a0;
  text-shadow: 1px 1px 0 #fff;

  &::after {
    content: '';
    flex: 1;
    height: 1px;
    background: #a0a0a0;
  }
`;

const Actions = styled.footer`
  display: flex;
  justify-content: flex-end;
  gap: 2px;
  padding: 8px 11px 11px;
`;

const ActionButton = styled.button<{ $primary?: boolean; $apart?: boolean }>`
  width: 73px;
  height: 21px;
  margin-left: ${(p) => (p.$apart ? '10px' : '0')};
  border: ${(p) => (p.$primary ? '2px solid #0078d7' : '1px solid #adadad')};
  background: #e1e1e1;
  text-align: center;
`;

/* ---------- taskbar ---------- */

const Taskbar = styled.nav`
  position: relative;
  display: flex;
  height: 25px;
  background: rgba(9, 9, 9, 0.82);
`;

const taskCell = css`
  display: flex;
  align-items: center;
  justify-content: center;
  height: 25px;
  padding-top: 5px;
`;

const StartArea = styled.div`
  flex: 1;
  display: flex;
`;

const TaskButton = styled.button<{ $active?: boolean }>`
  ${taskCell}
  width: 36px;
  background: ${(p) => (p.$active ? '#403e3d' : 'none')};
`;

const PinnedApps = styled.div`
  display: flex;
  gap: 1px;
  padding-right: 34px;
`;

const Tray = styled.div`
  flex: 1;
  display: flex;
  justify-content: flex-end;
`;

const Weather = styled.button`
  ${taskCell}
  gap: 8px;
  margin-right: 11px;
  font-size: 13px;
`;

const StatusIcons = styled.div`
  display: flex;
  gap: 7px;
`;

const StatusButton = styled.button`
  ${taskCell}
`;

const Clock = styled.button`
  height: 25px;
  padding: 3px 11px 0;
`;

const NoticeButton = styled.button`
  ${taskCell}
  width: 40px;
`;

const ShowDesktop = styled.button`
  width: 5px;
  margin-left: 8px;
  border-left: 1px solid #6b6b6b;
`;

const pinned: { label: string; Art: React.ComponentType; active?: boolean }[] = [
  { label: 'Microsoft Edge', Art: Edge },
  { label: 'Files', Art: ExplorerPen },
  { label: 'Mail', Art: Mail },
  { label: 'Microsoft Store', Art: Store },
  { label: 'Google Chrome', Art: Chrome },
  { label: 'Word', Art: Word },
  { label: 'Excel', Art: Excel },
  { label: 'PowerPoint', Art: PowerPoint },
  { label: 'WhatsApp', Art: WhatsApp },
  { label: 'Control Panel', Art: ControlCard },
  { label: 'OBS Studio', Art: ObsDisc },
  { label: 'Visual Studio Code', Art: VsCode },
  { label: 'XAMPP', Art: Xampp },
  { label: 'File Explorer', Art: ExplorerFolder },
  { label: 'Movies & TV', Art: Movies },
  { label: 'Google Chrome profile', Art: ChromeProfile },
  { label: 'Git Setup', Art: GitTask, active: true },
];

const StatusBar = () => (
  <Tray>
    <Weather type="button">
      <svg width="22" height="20" viewBox="0 0 22 20" aria-hidden="true">
        <path d="M11 0c6 3 8 9 4 14-3 4-10 4-14 0 8 1 12-5 10-14z" fill="#fbc814" />
        <path d="M1 18c1-3 3-3 5-3 1-3 7-5 9-1 3-1 6 1 6 4z" fill="#d9cfc6" />
        <path d="M6 19c2-3 9-3 12 0z" fill="#a08a7c" />
      </svg>
      <span>28°C</span>
      <span>Kabut</span>
    </Weather>
    <StatusIcons>
      <StatusButton type="button" aria-label="Show hidden icons">
        <svg width="16" height="16" viewBox="0 0 16 16" fill="none" stroke="#fff" strokeWidth="1.300" aria-hidden="true">
          <path d="M1 11l6-6 6 6" />
        </svg>
      </StatusButton>
      <StatusButton type="button" aria-label="Meet now">
        <svg width="16" height="18" viewBox="0 0 16 18" fill="none" stroke="#fff" aria-hidden="true">
          <rect x="3.500" y="5.500" width="7" height="7" rx="1.500" />
          <path d="M11 8.500l2.500-2v5l-2.500-2M4 2.500c2-1.500 6-1.500 8 0M4 15.500c2 1.500 6 1.500 8 0" />
        </svg>
      </StatusButton>
      <StatusButton type="button" aria-label="Network">
        <svg width="16" height="16" viewBox="0 0 16 16" fill="none" stroke="#fff" aria-hidden="true">
          <path d="M5 3.500h10.500v8h-11V7M9.500 12v3M6 14.500h7M.5 2.500h4v3h-4zM2.500 6v5" />
        </svg>
      </StatusButton>
      <StatusButton type="button" aria-label="Volume">
        <svg width="20" height="16" viewBox="0 0 20 16" fill="none" stroke="#fff" aria-hidden="true">
          <path d="M1.500 6h2L7 2.500v11L3.500 10h-2zM9.500 5.500c1.500 1.500 1.500 3.500 0 5" />
          <path d="M11.500 3.500c2.500 2.500 2.500 6.500 0 9M13.500 1.500c4 3.500 4 9.500 0 13" stroke="#777" />
        </svg>
      </StatusButton>
    </StatusIcons>
    <Clock type="button">7:19 PM</Clock>
    <NoticeButton type="button" aria-label="Notifications">
      <svg width="16" height="16" viewBox="0 0 16 16" fill="none" stroke="#fff" strokeWidth="1.200" aria-hidden="true">
        <path d="M.6 1h14.800v11.500h-5L8 15l-2.400-2.500h-5z" />
      </svg>
    </NoticeButton>
    <ShowDesktop type="button" aria-label="Show desktop" />
  </Tray>
);

export default function App() {
  return (
    <Desktop>
      <GlobalStyle />
      <Wallpaper />
      <IconGrid>
        {shortcuts.map((s) => (
          <DesktopIcon key={s.name.join(' ') + s.Art.name} {...s} />
        ))}
      </IconGrid>

      <SetupWindow aria-label="Git setup">
        <TitleBar>
          <Artwork $size={16} viewBox="0 0 32 32" aria-hidden="true">
            <GitSoft />
          </Artwork>
          <WindowTitle>Git 2.33.0.2 Setup</WindowTitle>
          <CaptionButton type="button" aria-label="Minimize">
            <svg width="10" height="10" viewBox="0 0 10 10" stroke="currentColor" aria-hidden="true">
              <path d="M0 5.500h10" />
            </svg>
          </CaptionButton>
          <CaptionButton type="button" aria-label="Maximize" $muted disabled>
            <svg width="10" height="10" viewBox="0 0 10 10" fill="none" stroke="currentColor" aria-hidden="true">
              <path d="M.5 .5h9v9h-9z" />
            </svg>
          </CaptionButton>
          <CaptionButton type="button" aria-label="Close">
            <svg width="10" height="10" viewBox="0 0 10 10" stroke="currentColor" strokeWidth="1.100" aria-hidden="true">
              <path d="M0 0l10 10M10 0L0 10" />
            </svg>
          </CaptionButton>
        </TitleBar>

        <PageHead>
          <HeadText>
            <HeadTitle>Configuring experimental options</HeadTitle>
            <HeadNote>These features are developed actively. Would you like to try them?</HeadNote>
          </HeadText>
          <Artwork $size={48} viewBox="0 0 32 32" aria-hidden="true">
            <GitSoft />
          </Artwork>
        </PageHead>

        <Options>
          <Option>
            <OptionLabel htmlFor="pseudo-consoles">
              <CheckBox id="pseudo-consoles" type="checkbox" />
              Enable experimental support for pseudo consoles.
            </OptionLabel>
            <OptionText>
              <NewTag>(NEW!)</NewTag> This allows running native console programs like Node or Python in a
              <br />
              Git Bash window without using winpty, but it still has known bugs.
            </OptionText>
          </Option>
          <Option>
            <OptionLabel htmlFor="fs-monitor">
              <CheckBox id="fs-monitor" type="checkbox" />
              Enable experimental built-in file system monitor
            </OptionLabel>
            <OptionText>
              <NewTag>(NEW!)</NewTag> Automatically run a <DocLink href="#watcher">built-in file system watcher</DocLink>, to speed up common
              <br />
              operations such as `git status`, `git add`, `git commit`, etc in worktrees
              <br />
              containing many files.
            </OptionText>
          </Option>
        </Options>

        <HomeRow>https://gitforwindows.org/</HomeRow>
        <Actions>
          <ActionButton type="button">Back</ActionButton>
          <ActionButton type="button" $primary>
            Install
          </ActionButton>
          <ActionButton type="button" $apart>
            Cancel
          </ActionButton>
        </Actions>
      </SetupWindow>

      <Taskbar aria-label="Taskbar">
        <StartArea>
          <TaskButton type="button" aria-label="Start">
            <Artwork $size={16} viewBox="0 0 16 16" aria-hidden="true">
              <path d="M0 2.300l6.500-.9v6.100H0zM7.300 1.300L16 0v7.500H7.300zM0 8.300h6.500v6.200L0 13.600zM7.300 8.300H16V16l-8.700-1.300z" fill="#fff" />
            </Artwork>
          </TaskButton>
        </StartArea>
        <PinnedApps>
          {pinned.map(({ label, Art, active }) => (
            <TaskButton key={label} type="button" aria-label={label} $active={active}>
              <Artwork $size={16} viewBox="0 0 32 32" aria-hidden="true">
                <Art />
              </Artwork>
            </TaskButton>
          ))}
        </PinnedApps>
        <StatusBar />
      </Taskbar>
    </Desktop>
  );
}
